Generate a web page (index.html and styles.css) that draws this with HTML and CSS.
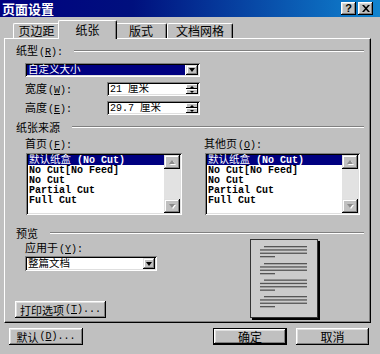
FILE: index.html
```html
<!DOCTYPE html>
<html>
<head>
<meta charset="utf-8">
<title>页面设置</title>
<link rel="stylesheet" href="styles.css">
</head>
<body>
<div class="titlebar">
  <span class="title">页面设置</span>
  <div class="tbtns">
    <span class="tbtn help">?</span>
    <span class="tbtn close"><svg width="8" height="7" viewBox="0 0 8 7"><path d="M0 0h2l2 2.2L6 0h2L5 3.5 8 7H6L4 4.8 2 7H0l3-3.5z" fill="#000"/></svg></span>
  </div>
</div>

<div class="tabs">
  <div class="tab t1">页边距</div>
  <div class="tab t2">纸张</div>
  <div class="tab t3">版式</div>
  <div class="tab t4">文档网格</div>
</div>

<div class="panel">
  <div class="hdr h1"><span><span class="cjk">纸型</span>(<u>R</u>):</span><i class="rule"></i></div>

  <div class="combo sunk c1 ind">
    <span class="val selval"><span class="fc">自定义大小</span></span>
    <span class="dd"><i class="tri"></i></span>
  </div>

  <div class="frow r1 ind">
    <span class="flabel"><span class="cjk">宽度</span>(<u>W</u>):</span>
    <div class="spin sunk">
      <span class="val">21 <span class="fc">厘米</span></span>
      <span class="spinbtns"><b class="up"><i></i></b><b class="down"><i></i></b></span>
    </div>
  </div>

  <div class="frow r2 ind">
    <span class="flabel"><span class="cjk">高度</span>(<u>E</u>):</span>
    <div class="spin sunk">
      <span class="val">29.7 <span class="fc">厘米</span></span>
      <span class="spinbtns"><b class="up"><i></i></b><b class="down"><i></i></b></span>
    </div>
  </div>

  <div class="hdr h2"><span class="cjk">纸张来源</span><i class="rule"></i></div>

  <div class="lists ind">
    <div class="lcol">
      <div class="llabel"><span class="cjk">首页</span>(<u>F</u>):</div>
      <div class="listbox sunk lb1">
        <div class="items">
          <div class="item sel"><span class="fc">默认纸盒</span> (No Cut)</div>
          <div class="item">No Cut[No Feed]</div>
          <div class="item">No Cut</div>
          <div class="item">Partial Cut</div>
          <div class="item">Full Cut</div>
        </div>
        <div class="sb">
          <span class="sbb"><i class="dis up"></i></span>
          <span class="track"></span>
          <span class="sbb"><i class="dis down"></i></span>
        </div>
      </div>
    </div>
    <div class="lcol">
      <div class="llabel"><span class="cjk">其他页</span>(<u>O</u>):</div>
      <div class="listbox sunk lb2">
        <div class="items">
          <div class="item sel"><span class="fc">默认纸盒</span> (No Cut)</div>
          <div class="item">No Cut[No Feed]</div>
          <div class="item">No Cut</div>
          <div class="item">Partial Cut</div>
          <div class="item">Full Cut</div>
        </div>
        <div class="sb">
          <span class="sbb"><i class="dis up"></i></span>
          <span class="track"></span>
          <span class="sbb"><i class="dis down"></i></span>
        </div>
      </div>
    </div>
  </div>

  <div class="hdr h3"><span class="cjk">预览</span><i class="rule"></i></div>

  <div class="preview">
    <div class="pv-left">
      <div class="plabel ind"><span class="cjk">应用于</span>(<u>Y</u>):</div>
      <div class="combo sunk c2 ind">
        <span class="val"><span class="fc">整篇文档</span></span>
        <span class="dd"><i class="tri"></i></span>
      </div>
      <div class="btn pbtn"><span class="cjk">打印选项</span>(<u>T</u>)...</div>
    </div>
    <svg class="page" width="70" height="81" viewBox="0 0 70 81">
      <rect x="2" y="2" width="68" height="79" fill="#000"/>
      <rect x="0.5" y="0.5" width="67" height="78" fill="#cbcbcb" stroke="#333"/>
      <g fill="#555">
        <rect x="14" y="7" width="43" height="1.3"/>
        <rect x="10" y="10.3" width="47" height="1.3"/>
        <rect x="10" y="13.6" width="47" height="1.3"/>
        <rect x="10" y="17" width="15" height="1.3"/>

        <rect x="14" y="24" width="43" height="1.3"/>
        <rect x="10" y="27.3" width="47" height="1.3"/>
        <rect x="10" y="30.6" width="47" height="1.3"/>
        <rect x="10" y="34" width="15" height="1.3"/>

        <rect x="14" y="40.5" width="43" height="1.3"/>
        <rect x="10" y="43.8" width="47" height="1.3"/>
        <rect x="10" y="47.1" width="47" height="1.3"/>
        <rect x="10" y="50.5" width="15" height="1.3"/>

        <rect x="14" y="57" width="43" height="1.3"/>
        <rect x="10" y="60.3" width="47" height="1.3"/>
        <rect x="10" y="63.6" width="47" height="1.3"/>
        <rect x="10" y="67" width="15" height="1.3"/>
      </g>
    </svg>
  </div>
</div>

<div class="footer">
  <div class="btn fbtn"><span class="cjk">默认</span>(<u>D</u>)...</div>
  <span class="spacer"></span>
  <div class="btn fbtn ok">确定</div>
  <div class="btn fbtn cancel">取消</div>
</div>
</body>
</html>
```

FILE: styles.css
```css
* { box-sizing: border-box; }
html, body { margin: 0; padding: 0; }
body {
  width: 380px;
  height: 354px;
  overflow: hidden;
  background: #c0c0c0;
  color: #000;
  font-family: "Liberation Mono", "Noto Sans CJK SC", monospace;
  font-size: 10px;
}
u { text-decoration: underline; text-underline-offset: 1px; }
.cjk { font-family: "Noto Sans CJK SC", sans-serif; font-size: 11px; margin-right: 1px; }
/* CJK text inside 10px-high field rows: zero line-height so it never grows the row */
.fc {
  font-family: "Noto Sans CJK SC", sans-serif;
  font-size: 10.5px;
  font-weight: normal;
  line-height: 0;
}

/* title bar */
.titlebar {
  height: 17px;
  display: flex;
  align-items: center;
  padding: 0 7px 0 2px;
  background: linear-gradient(to right, #000080 0%, #00107e 35%, #1084d0 100%);
}
.title {
  flex: 1;
  color: #fff;
  font: bold 13px/17px "Noto Sans CJK SC", sans-serif;
}
.tbtns { display: flex; gap: 2px; }
.tbtn {
  width: 15px;
  height: 13px;
  background: #c0c0c0;
  box-shadow: inset -1px -1px #000, inset 1px 1px #fff, inset -2px -2px #808080, inset 2px 2px #dfdfdf;
  display: flex;
  align-items: center;
  justify-content: center;
  font: bold 11px/1 "Liberation Sans", sans-serif;
}
.tbtn svg { display: block; }

/* tabs */
.tabs {
  display: flex;
  align-items: flex-start;
  height: 18px;
  margin-top: 3px;
  padding-left: 13px;
}
.tab {
  height: 15px;
  margin-top: 3px;
  background: #c0c0c0;
  border-top: 1px solid #fff;
  border-left: 1px solid #fff;
  border-right: 1px solid #000;
  box-shadow: inset -1px 0 #808080;
  border-radius: 2px 2px 0 0;
  font: 12px/14px "Noto Sans CJK SC", sans-serif;
  text-align: center;
}
.t1 { width: 47px; }
.t2 {
  width: 59px;
  height: 19px;
  margin-top: 0;
  margin-left: -2px;
  position: relative;
  z-index: 1;
  line-height: 17px;
}
.t3 { width: 52px; margin-left: -2px; }
.t4 { width: 66px; }

/* panel */
.panel {
  margin-left: 4px;
  width: 367px;
  height: 285px;
  border-top: 1px solid #fff;
  border-left: 1px solid #fff;
  border-right: 1px solid #000;
  border-bottom: 1px solid #000;
  box-shadow: inset -1px -1px #808080;
  padding: 0 6px 0 11px;
  display: flex;
  flex-direction: column;
}
.ind { margin-left: 9px; }

.hdr {
  height: 12px;
  display: flex;
  align-items: center;
  white-space: nowrap;
  line-height: 12px;
}
.hdr > span { line-height: 12px; }
.rule {
  flex: 1;
  margin-left: 11px;
  height: 2px;
  border-top: 1px solid #808080;
  border-bottom: 1px solid #fff;
}
.h1 { margin-top: 6px; }
.h2 { margin-top: 6px; }
.h3 { margin-top: 12px; }

.sunk {
  background: #fff;
  box-shadow: inset 1px 1px #808080, inset -1px -1px #fff, inset 2px 2px #000, inset -2px -2px #dfdfdf;
  padding: 2px;
}

.combo {
  display: flex;
  height: 14px;
}
.combo .val,
.spin .val {
  flex: 1;
  display: block;
  padding: 1.4px 0 0 1px;
  line-height: 10px;
  white-space: pre;
}
.selval { background: #000080; color: #fff; margin-right: 1px; }
.c1 { margin-top: 6px; width: 175px; }
.c2 { margin-top: 3px; width: 132px; height: 15px; }
.c2 .val { padding-top: 2px; }

.dd {
  width: 12px;
  background: #c0c0c0;
  box-shadow: inset -1px -1px #000, inset 1px 1px #dfdfdf, inset -2px -2px #808080, inset 2px 2px #fff;
  display: flex;
  align-items: center;
  justify-content: center;
}
.tri {
  width: 0;
  height: 0;
  border-left: 3.5px solid transparent;
  border-right: 3.5px solid transparent;
  border-top: 4px solid #000;
}

.frow {
  display: flex;
  align-items: center;
  height: 14px;
}
.r1 { margin-top: 5px; }
.r2 { margin-top: 5px; }
.flabel { width: 82px; white-space: nowrap; line-height: 12px; }
.spin {
  width: 93px;
  height: 14px;
  display: flex;
}
.spinbtns {
  width: 12px;
  display: flex;
  flex-direction: column;
}
.spinbtns b {
  flex: 1;
  background: #c0c0c0;
  box-shadow: inset -1px -1px #000, inset 1px 1px #fff;
  display: flex;
  align-items: center;
  justify-content: center;
}
.spinbtns .up i {
  border-left: 2.5px solid transparent;
  border-right: 2.5px solid transparent;
  border-bottom: 2px solid #000;
}
.spinbtns .down i {
  border-left: 2.5px solid transparent;
  border-right: 2.5px solid transparent;
  border-top: 2px solid #000;
}

/* lists */
.lists {
  display: grid;
  grid-template-columns: 179px 1fr;
  margin-top: 4px;
}
.llabel { height: 12px; line-height: 12px; white-space: nowrap; }
.listbox {
  margin-top: 4px;
  margin-left: 1px;
  height: 62px;
  display: flex;
}
.lb1 { width: 156px; }
.lb2 { width: 155px; }
.items { flex: 1; }
.item {
  height: 10px;
  font: bold 10px/10px "Liberation Mono", "Noto Sans CJK SC", monospace;
  padding: 1.3px 0 0 1px;
  white-space: pre;
}
.item.sel { background: #000080; color: #fff; }
.sb {
  width: 16px;
  display: flex;
  flex-direction: column;
  background: #e2e2e2;
}
.sbb {
  height: 14px;
  background: #c0c0c0;
  box-shadow: inset -1px -1px #000, inset 1px 1px #dfdfdf, inset -2px -2px #808080, inset 2px 2px #fff;
  display: flex;
  align-items: center;
  justify-content: center;
}
.track { flex: 1; }
.dis { width: 0; height: 0; }
.dis.up {
  border-left: 3.5px solid transparent;
  border-right: 3.5px solid transparent;
  border-bottom: 4px solid #8a8a8a;
  filter: drop-shadow(1px 1px 0 #fff);
}
.dis.down {
  border-left: 3.5px solid transparent;
  border-right: 3.5px solid transparent;
  border-top: 4px solid #8a8a8a;
  filter: drop-shadow(1px 1px 0 #fff);
}

/* preview */
.preview {
  display: flex;
  align-items: flex-start;
}
.pv-left {
  width: 234px;
  display: flex;
  flex-direction: column;
  align-items: flex-start;
}
.plabel { margin-top: 2px; height: 12px; line-height: 12px; white-space: nowrap; }
.page { display: block; }

.btn {
  height: 17px;
  background: #c0c0c0;
  box-shadow: inset -1px -1px #000, inset 1px 1px #fff, inset -2px -2px #808080, inset 2px 2px #dfdfdf;
  display: flex;
  align-items: center;
  justify-content: center;
  white-space: nowrap;
  line-height: 12px;
}
.pbtn { margin-top: 30px; margin-left: -1px; width: 91px; }

/* footer */
.footer {
  display: flex;
  margin-top: 5px;
  padding: 0 11px 0 9px;
  height: 17px;
}
.spacer { flex: 1; }
.fbtn { width: 74px; }
.ok {
  border: 1px solid #000;
  font-family: "Noto Sans CJK SC", sans-serif;
  font-size: 12px;
}
.cancel {
  width: 73px;
  margin-left: 9px;
  font-family: "Noto Sans CJK SC", sans-serif;
  font-size: 12px;
}
```
